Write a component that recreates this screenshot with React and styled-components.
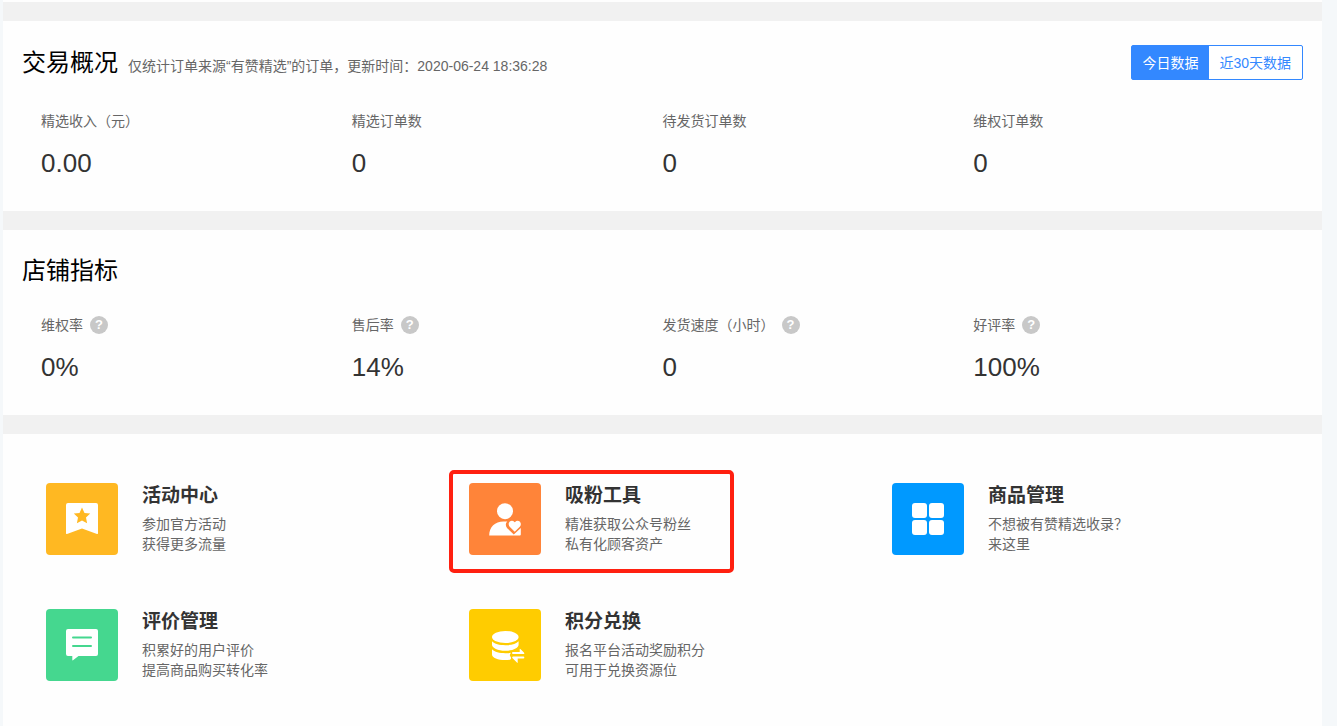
import React, { useState } from "react";
import styled, { createGlobalStyle } from "styled-components";

const GlobalStyle = createGlobalStyle`
  * { box-sizing: border-box; }
  body {
    margin: 0;
    background: #f5f8fa;
    color: #333;
    font-family: "Liberation Sans", "Noto Sans CJK SC", sans-serif;
    font-size: 14px;
    line-height: 20px;
  }
  #root { min-height: 100vh; display: flex; flex-direction: column; }
  h2, h3, p, dl, dd { margin: 0; }
`;

const Page = styled.main`
  flex: 1;
  display: flex;
  flex-direction: column;
  gap: 19px;
  margin: 0 15px 0 3px;
  padding-top: 19px;
  border-top: 2px solid #fefefe;
  background: #f1f1f1;
`;

const Panel = styled.section`
  padding: 24px 19px 32px;
  background: #fefefe;
`;

const PanelHeader = styled.header`
  display: flex;
  align-items: center;
  justify-content: space-between;
`;

const Heading = styled.div`
  display: flex;
  align-items: baseline;
  gap: 10px;
`;

const Title = styled.h2`
  color: #000;
  font-size: 24px;
  font-weight: 400;
  line-height: 34px;
`;

const Note = styled.p`
  color: #666;
`;

const Segmented = styled.div`
  display: flex;
  border: 1px solid #3388ff;
  border-radius: 2px;
  background: #fff;
`;

const Segment = styled.button`
  height: 33px;
  padding: 0 11px 0 10px;
  border: 0;
  background: ${(p) => (p.$active ? "#3388ff" : "transparent")};
  color: ${(p) => (p.$active ? "#fff" : "#3388ff")};
  font: inherit;
  cursor: pointer;
`;

const Stats = styled.dl`
  display: grid;
  grid-template-columns: repeat(4, 1fr);
  padding: ${(p) => (p.$tight ? 27 : 31)}px 19px 0;
`;

const StatLabel = styled.dt`
  display: flex;
  align-items: center;
  gap: 7px;
  margin-bottom: 16px;
  color: #666;
`;

const StatValue = styled.dd`
  font-size: 26px;
  line-height: 32px;
`;

const Help = styled.button`
  width: 18px;
  height: 18px;
  padding: 0;
  border: 0;
  border-radius: 50%;
  background: #c8c8c8;
  color: #fff;
  font: bold 13px/18px "Liberation Sans", sans-serif;
  cursor: help;
`;

const ToolPanel = styled(Panel)`
  flex: 1;
  padding: 49px 7px 45px 43px;
`;

const ToolGrid = styled.div`
  display: grid;
  grid-template-columns: repeat(3, 1fr);
  row-gap: 54px;
`;

const ToolCard = styled.a`
  position: relative;
  display: flex;
  gap: 24px;
  color: inherit;
  text-decoration: none;
`;

const Highlight = styled.span`
  position: absolute;
  top: -13px;
  left: -20px;
  width: 285px;
  height: 103px;
  border: 4px solid #ff2010;
  border-radius: 5px;
  pointer-events: none;
`;

const Tile = styled.span`
  display: flex;
  flex: none;
  align-items: center;
  justify-content: center;
  width: 72px;
  height: 72px;
  border-radius: 4px;
  background: ${(p) => p.$color};
`;

const IconSvg = styled.svg`
  overflow: visible;
`;

const ToolName = styled.h3`
  margin-bottom: 5px;
  font-size: 19px;
  font-weight: 700;
  line-height: 26px;
`;

const ToolText = styled.p`
  color: #666;
  white-space: pre-line;
`;

const Icon = ({ children }) => (
  <IconSvg width="32" height="32" viewBox="0 0 32 32" fill="#fff" aria-hidden="true">
    {children}
  </IconSvg>
);

const BookmarkIcon = () => (
  <Icon>
    <path
      fillRule="evenodd"
      d="M2 0h28a2 2 0 0 1 2 2v28.300q0 1-1 .6L16 25.500 1 30.900q-1 .4-1-.6V2a2 2 0 0 1 2-2zM16 4.600l2.500 5.300 5.700.7-4.200 4 1.100 5.700-5.100-2.800-5.100 2.800 1.100-5.700-4.200-4 5.700-.7z"
    />
  </Icon>
);

const FansIcon = () => (
  <Icon>
    <circle cx="16" cy="8.200" r="8" />
    <path d="M.2 32.500C.2 24 6 18.500 14.500 18.500H18.300C16.300 20.500 16.400 23.200 18.200 25.200L24.800 31.500 31.800 25V31.500a1 1 0 0 1-1 1z" />
    <path d="M25.700 28.700l-5-5c-1.500-1.500-1.400-3.900.1-5.200 1.400-1.200 3.400-1 4.600.4l.3.400.4-.4c1.200-1.400 3.200-1.600 4.600-.4 1.500 1.300 1.600 3.700.1 5.200z" />
  </Icon>
);

const GridIcon = () => (
  <Icon>
    <rect width="15" height="15" rx="3" />
    <rect x="17" width="15" height="15" rx="3" />
    <rect y="17" width="15" height="15" rx="3" />
    <rect x="17" y="17" width="15" height="15" rx="3" />
  </Icon>
);

const CommentIcon = () => (
  <Icon>
    <path d="M2 0h28a2 2 0 0 1 2 2v23a2 2 0 0 1-2 2H12.500L7 31.300q-.7.400-.7-.5V27H2a2 2 0 0 1-2-2V2a2 2 0 0 1 2-2z" />
    <path d="M7 8.500h18M7 17h18" stroke="#45d78f" strokeWidth="2" strokeLinecap="round" />
  </Icon>
);

const PointsIcon = () => (
  <Icon>
    <ellipse cx="16.300" cy="8" rx="13.300" ry="6" />
    <path d="M3 12.300c2.500 2.700 7.500 3.900 13.300 3.900s10.800-1.200 13.300-3.900v3.500c0 3.300-5.900 6-13.300 6S3 19.100 3 15.800z" />
    <path d="M3 20.300c2.500 2.700 7.500 3.900 13.300 3.900 2 0 3.900-.1 5.700-.5-1.300 1.300-1.500 2.700-.6 3.700 1 1.200.9 3-.6 3.300-1.400.3-2.900.4-4.500.4C8.900 31.100 3 28.700 3 25.400z" />
    <path d="M24 22.900h6.700v-2.500q0-1 .7-.3l3.500 3.300q1.200 1.500-.8 1.500H24a1 1 0 0 1 0-2z" />
    <path d="M34.300 29.500h-5.600v3.800q0 1-.8.300l-4.500-4.600q-1-1.500.8-1.600h10.100a1 1 0 0 1 0 2.100z" />
  </Icon>
);

const trades = [
  { label: "精选收入（元）", value: "0.00" },
  { label: "精选订单数", value: "0" },
  { label: "待发货订单数", value: "0" },
  { label: "维权订单数", value: "0" },
];

const metrics = [
  { label: "维权率", value: "0%", help: true },
  { label: "售后率", value: "14%", help: true },
  { label: "发货速度（小时）", value: "0", help: true },
  { label: "好评率", value: "100%", help: true },
];

const tools = [
  { name: "活动中心", text: "参加官方活动\n获得更多流量", color: "#ffb822", Glyph: BookmarkIcon },
  { name: "吸粉工具", text: "精准获取公众号粉丝\n私有化顾客资产", color: "#ff8439", Glyph: FansIcon, highlighted: true },
  { name: "商品管理", text: "不想被有赞精选收录？\n来这里", color: "#0099ff", Glyph: GridIcon },
  { name: "评价管理", text: "积累好的用户评价\n提高商品购买转化率", color: "#45d78f", Glyph: CommentIcon },
  { name: "积分兑换", text: "报名平台活动奖励积分\n可用于兑换资源位", color: "#ffcc00", Glyph: PointsIcon },
];

const ranges = ["今日数据", "近30天数据"];

const StatList = ({ items, tight }) => (
  <Stats $tight={tight}>
    {items.map(({ label, value, help }) => (
      <div key={label}>
        <StatLabel>
          {label}
          {help && <Help type="button" aria-label={`${label}说明`}>?</Help>}
        </StatLabel>
        <StatValue>{value}</StatValue>
      </div>
    ))}
  </Stats>
);

export default function App() {
  const [range, setRange] = useState(ranges[0]);

  return (
    <>
      <GlobalStyle />
      <Page>
        <Panel>
          <PanelHeader>
            <Heading>
              <Title>交易概况</Title>
              <Note>仅统计订单来源“有赞精选”的订单，更新时间：2020-06-24 18:36:28</Note>
            </Heading>
            <Segmented>
              {ranges.map((name) => (
                <Segment
                  key={name}
                  type="button"
                  $active={name === range}
                  aria-pressed={name === range}
                  onClick={() => setRange(name)}
                >
                  {name}
                </Segment>
              ))}
            </Segmented>
          </PanelHeader>
          <StatList items={trades} />
        </Panel>

        <Panel>
          <PanelHeader>
            <Title>店铺指标</Title>
          </PanelHeader>
          <StatList items={metrics} tight />
        </Panel>

        <ToolPanel>
          <ToolGrid>
            {tools.map(({ name, text, color, Glyph, highlighted }) => (
              <ToolCard key={name} href="#">
                <Tile $color={color}>
                  <Glyph />
                </Tile>
                <div>
                  <ToolName>{name}</ToolName>
                  <ToolText>{text}</ToolText>
                </div>
                {highlighted && <Highlight />}
              </ToolCard>
            ))}
          </ToolGrid>
        </ToolPanel>
      </Page>
    </>
  );
}
